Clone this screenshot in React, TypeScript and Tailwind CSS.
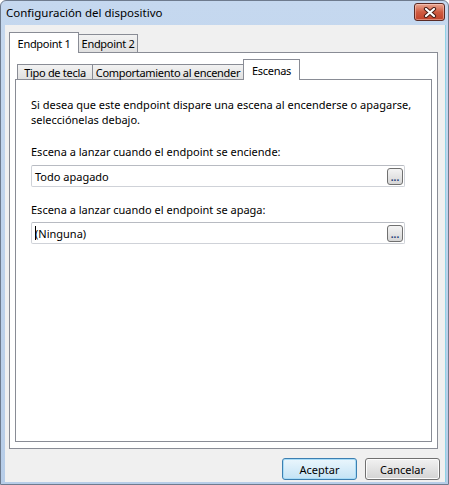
import React from 'react'

const font = { fontFamily: '"Noto Sans", "Liberation Sans", sans-serif' }

function CloseButton() {
  return (
    <div className="mt-[2px] mr-[3px] w-[31px] h-[18px] rounded-[3px] border border-[#5a2a24] bg-gradient-to-b from-[#e9a893] via-[#cf5b41] to-[#c0412a] flex items-center justify-center shadow-[inset_0_0_0_1px_rgba(255,220,210,0.45)]">
      <svg width="14" height="11" viewBox="0 0 14 11">
        <path d="M3 2 L11 9 M11 2 L3 9" stroke="#4a1e16" strokeWidth="4.2" strokeLinecap="round" />
        <path d="M3 2 L11 9 M11 2 L3 9" stroke="#ffffff" strokeWidth="2.2" strokeLinecap="round" />
      </svg>
    </div>
  )
}

function Tab({
  label,
  selected,
  width,
  height,
  first,
}: {
  label: string
  selected?: boolean
  width: string
  height: string
  first?: boolean
}) {
  return (
    <div
      className={`${width} ${height} ${first ? '' : '-ml-px'} shrink-0 whitespace-nowrap tracking-[-0.3px] border border-[#898c95] flex items-center justify-center text-black leading-none ${
        selected
          ? 'bg-white border-b-0 -mb-px relative z-10'
          : 'bg-gradient-to-b from-[#f2f2f2] to-[#e0e0e0] border-b-0'
      }`}
    >
      {label}
    </div>
  )
}

function SceneField({ value, caret }: { value: string; caret?: boolean }) {
  return (
    <div className="w-[374px] h-[22px] border border-[#cfd2d8] border-t-[#b8bbc2] rounded-[2px] bg-white flex items-center pl-[3px] pr-[1px]">
      <div className="flex-1 flex items-center">
        {caret && <span className="inline-block w-px h-[14px] bg-black" />}
        <span className={caret ? '-ml-px' : ''}>{value}</span>
      </div>
      <button className="w-[16px] h-[17px] rounded-[3px] border border-[#707070] bg-gradient-to-b from-[#f4f4f4] to-[#d6d6d6] flex items-end justify-center pb-[2px] text-[10px] leading-none font-bold text-[#1f3c78]">
        ...
      </button>
    </div>
  )
}

function DialogButton({ label, isDefault }: { label: string; isDefault?: boolean }) {
  return (
    <button
      className={`w-[75px] h-[22px] rounded-[3px] border text-black leading-none ${
        isDefault
          ? 'border-[#3c7fb1] bg-gradient-to-b from-[#eaf6fd] to-[#c4e3f5] shadow-[inset_0_0_0_1px_#a8dcf7]'
          : 'border-[#707070] bg-gradient-to-b from-[#f2f2f2] to-[#d4d4d4] shadow-[inset_0_0_0_1px_#fcfcfc]'
      }`}
    >
      {label}
    </button>
  )
}

export default function App() {
  return (
    <div
      className="w-[449px] h-[485px] flex flex-col rounded-t-[6px] border border-[#6e7b8e] bg-gradient-to-b from-[#c5d8ef] to-[#b7cde8] text-[11px] text-black"
      style={font}
    >
      {/* Title bar */}
      <div className="h-[24px] flex items-start">
        <div className="flex-1 h-[23px] flex items-center pl-[5px] text-[11.5px]">
          Configuración del dispositivo
        </div>
        <CloseButton />
      </div>

      {/* Client area */}
      <div className="flex-1 ml-[4px] mr-[2px] mb-[2px] bg-[#f0f0f0] flex flex-col pt-[7px] pl-[4px] border-r border-[#8fd3e6]">
        {/* Outer tabs */}
        <div className="flex items-end h-[20px]">
          <Tab label="Endpoint 1" selected width="w-[70px]" height="h-[21px]" first />
          <Tab label="Endpoint 2" width="w-[60px]" height="h-[18px]" />
        </div>
        <div className="w-[429px] h-[397px] border border-[#898c95] bg-white pl-[5px] pt-[6px]">
          {/* Inner tabs */}
          <div className="flex items-end h-[20px] pl-[2px]">
            <Tab label="Tipo de tecla" width="w-[76px]" height="h-[15px]" first />
            <Tab label="Comportamiento al encender" width="w-[152px]" height="h-[15px]" />
            <Tab label="Escenas" selected width="w-[57px]" height="h-[21px]" />
          </div>
          <div className="w-[417px] h-[363px] border border-[#898c95] bg-white pl-[15px] pt-[17px] leading-[15px]">
            <p>Si desea que este endpoint dispare una escena al encenderse o apagarse,</p>
            <p>selecciónelas debajo.</p>

            <div className="mt-[17px]">Escena a lanzar cuando el endpoint se enciende:</div>
            <div className="mt-[6px]">
              <SceneField value="Todo apagado" />
            </div>

            <div className="mt-[15px]">Escena a lanzar cuando el endpoint se apaga:</div>
            <div className="mt-[5px]">
              <SceneField value="(Ninguna)" caret />
            </div>
          </div>
        </div>

        {/* Buttons */}
        <div className="flex justify-end gap-[8px] pr-[5px] mt-[9px]">
          <DialogButton label="Aceptar" isDefault />
          <DialogButton label="Cancelar" />
        </div>
      </div>
    </div>
  )
}
